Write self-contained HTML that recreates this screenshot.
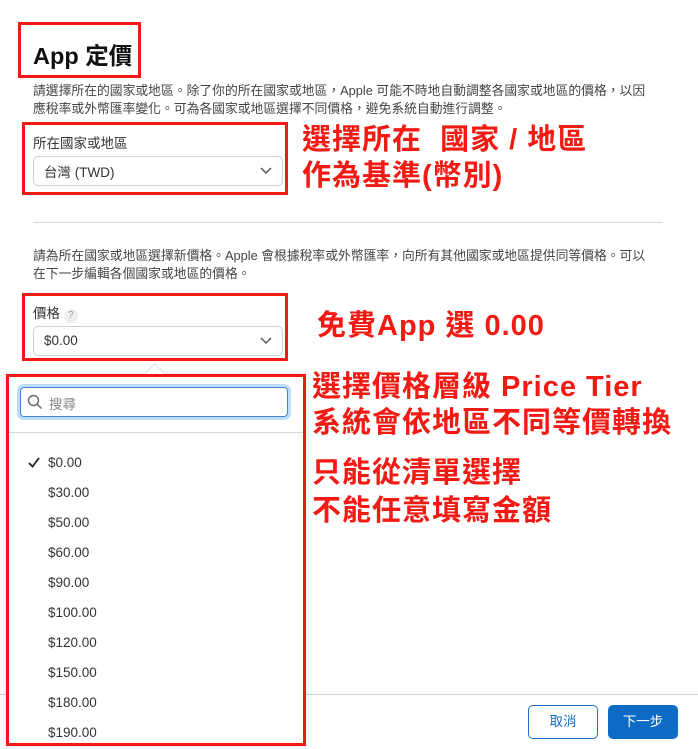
<!DOCTYPE html>
<html><head><meta charset="utf-8"><style>
*{margin:0;padding:0;box-sizing:border-box}
body{width:698px;height:749px;background:#fff;position:relative;overflow:hidden;font-family:"Liberation Sans","Noto Sans CJK TC",sans-serif;color:#333}
.a{position:absolute;white-space:nowrap}
.red{position:absolute;border:3px solid #f21b14}
.ann{position:absolute;color:#f21b14;font-weight:bold;font-size:29px;letter-spacing:1px;white-space:nowrap;line-height:1}
.sel{position:absolute;border:1px solid #d0d0d0;border-radius:5px;background:#fff;font-size:13.5px;color:#333}
.sel span{position:absolute;left:10px;top:4px}
.sel svg{position:absolute;right:10px;top:10px}
.p{font-size:12.8px;color:#444;line-height:18px}
.it{position:absolute;left:48px;font-size:13.5px;color:#333}
</style></head><body>
<div class="red" style="left:18px;top:22px;width:123px;height:56px"></div>
<div class="a" style="left:33px;top:37px;font-size:23.5px;font-weight:bold;color:#111">App 定價</div>
<div class="a p" style="left:33px;top:82px">請選擇所在的國家或地區。除了你的所在國家或地區，Apple 可能不時地自動調整各國家或地區的價格，以因<br>應稅率或外幣匯率變化。可為各國家或地區選擇不同價格，避免系統自動進行調整。</div>
<div class="red" style="left:22px;top:122px;width:266px;height:73px"></div>
<div class="a" style="left:33px;top:132px;font-size:13.5px;color:#333">所在國家或地區</div>
<div class="sel" style="left:33px;top:156px;width:250px;height:30px"><span>台灣 (TWD)</span><svg width="12" height="8" viewBox="0 0 12 8"><path d="M1 1l5 5 5-5" fill="none" stroke="#555" stroke-width="1.5"/></svg></div>
<div class="ann" style="left:302px;top:126px">選擇所在&nbsp;&nbsp;國家 / 地區</div>
<div class="ann" style="left:302px;top:162px">作為基準(幣別)</div>
<div class="a" style="left:33px;top:222px;width:630px;height:1px;background:#d8d8d8"></div>
<div class="a p" style="left:33px;top:247px">請為所在國家或地區選擇新價格。Apple 會根據稅率或外幣匯率，向所有其他國家或地區提供同等價格。可以<br>在下一步編輯各個國家或地區的價格。</div>
<div class="red" style="left:22px;top:293px;width:266px;height:68px"></div>
<div class="a" style="left:33px;top:302px;font-size:13.5px;color:#333">價格 <span style="display:inline-block;width:14px;height:14px;border-radius:7px;background:#eee;color:#999;font-size:10px;text-align:center;line-height:14px">?</span></div>
<div class="sel" style="left:33px;top:326px;width:250px;height:30px"><span style="top:6px">$0.00</span><svg width="12" height="8" viewBox="0 0 12 8"><path d="M1 1l5 5 5-5" fill="none" stroke="#555" stroke-width="1.5"/></svg></div>
<div class="ann" style="left:317px;top:312px">免費App 選 0.00</div>
<div class="a" style="left:0;top:694px;width:698px;height:1px;background:#d0d0d0"></div>
<div class="a" style="left:6px;top:374px;width:300px;height:372px;background:#fff;box-shadow:0 0 6px rgba(0,0,0,.15)"></div>
<div class="a" style="left:148px;top:366px;width:14px;height:14px;background:#fff;transform:rotate(45deg);border-left:1px solid #ddd;border-top:1px solid #ddd"></div>
<div class="red" style="left:6px;top:374px;width:300px;height:372px"></div>
<div class="a" style="left:20px;top:387px;width:268px;height:30px;border:1.5px solid #3a86d4;border-radius:4px;box-shadow:0 0 0 3px #bcdcf8"></div>
<svg class="a" style="left:27px;top:394px" width="16" height="16" viewBox="0 0 16 16"><circle cx="6.5" cy="6.5" r="5" fill="none" stroke="#666" stroke-width="1.4"/><path d="M10 10l4.5 4.5" stroke="#666" stroke-width="1.4"/></svg>
<div class="a" style="left:49px;top:393px;font-size:13.5px;color:#888">搜尋</div>
<div class="a" style="left:9px;top:432px;width:294px;height:1px;background:#d8d8d8"></div>
<svg class="a" style="left:28px;top:457px" width="12" height="11" viewBox="0 0 12 11"><path d="M1 6l3.5 3.5L11 1" fill="none" stroke="#222" stroke-width="1.8"/></svg>
<div class="it" style="top:455px">$0.00</div>
<div class="it" style="top:485px">$30.00</div>
<div class="it" style="top:515px">$50.00</div>
<div class="it" style="top:545px">$60.00</div>
<div class="it" style="top:575px">$90.00</div>
<div class="it" style="top:605px">$100.00</div>
<div class="it" style="top:635px">$120.00</div>
<div class="it" style="top:665px">$150.00</div>
<div class="it" style="top:695px">$180.00</div>
<div class="it" style="top:725px">$190.00</div>
<div class="ann" style="left:312px;top:373px">選擇價格層級 Price Tier</div>
<div class="ann" style="left:312px;top:409px">系統會依地區不同等價轉換</div>
<div class="ann" style="left:312px;top:459px">只能從清單選擇</div>
<div class="ann" style="left:312px;top:497px">不能任意填寫金額</div>
<div class="a" style="left:528px;top:705px;width:70px;height:34px;border:1px solid #1a6fc4;border-radius:5px;color:#1a6fc4;font-size:13.5px;text-align:center;line-height:32px">取消</div>
<div class="a" style="left:608px;top:705px;width:70px;height:34px;background:#0b6bc5;border-radius:5px;color:#fff;font-size:13.5px;text-align:center;line-height:34px">下一步</div>
</body></html>
